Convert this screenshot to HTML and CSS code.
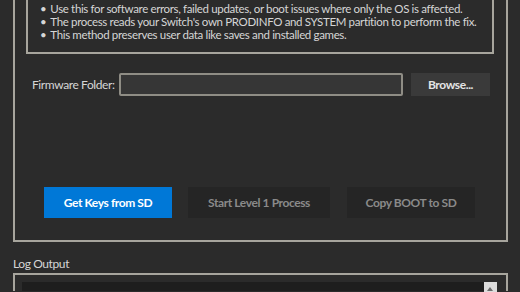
FILE: index.html
```html
<!DOCTYPE html>
<html lang="en">
<head>
    <meta charset="UTF-8">
    <meta name="viewport" content="width=device-width, initial-scale=1.0">
    <title>Level 1 Repair</title>
    <link rel="stylesheet" href="styles.css">
</head>
<body>
    <!-- Level 1 repair group -->
    <section class="group">
        <div class="info">
            <ul>
                <li>Use this for software errors, failed updates, or boot issues where only the OS is affected.</li>
                <li>The process reads your Switch's own PRODINFO and SYSTEM partition to perform the fix.</li>
                <li>This method preserves user data like saves and installed games.</li>
            </ul>
        </div>

        <div class="folder-row">
            <label class="folder-label">Firmware Folder:</label>
            <div class="textbox"></div>
            <button class="btn browse">Browse...</button>
        </div>

        <div class="actions">
            <button class="btn primary">Get Keys from SD</button>
            <button class="btn disabled">Start Level 1 Process</button>
            <button class="btn disabled">Copy BOOT to SD</button>
        </div>
    </section>

    <!-- Log -->
    <div class="log">
        <div class="log-label">Log Output</div>
        <div class="log-box">
            <div class="log-text"></div>
            <div class="scrollbar"><span class="arrow-up"></span></div>
        </div>
    </div>
</body>
</html>
```

FILE: styles.css
```css
html, body {
    margin: 0;
    height: 100%;
    overflow: hidden;
}
body {
    font-family: Lato, "Noto Sans", sans-serif;
    font-size: 12px;
    letter-spacing: -0.4px;
    background-color: #2b2b2b;
    color: #d6d6d6;
    padding: 0 12px 0 13px;
    white-space: nowrap;
}
.group {
    border: 2px solid #a7a59d;
    border-top: none;
    padding: 0 12px 22px 11px;
}
.info {
    border: 2px solid #a7a59d;
    border-top: none;
    height: 54px;
    box-sizing: border-box;
    padding-top: 2px;
}
.info ul {
    margin: 0;
    padding-left: 12px;
    list-style: none;
    font-size: 11.5px;
    letter-spacing: -0.35px;
    line-height: 13px;
}
.info li::before {
    content: "\2022";
    margin-right: 4px;
}
.folder-row {
    display: flex;
    align-items: center;
    margin-top: 19px;
    padding-left: 6px;
}
.folder-label {
    width: 87px;
}
.textbox {
    width: 284px;
    height: 23px;
    box-sizing: border-box;
    border: 2px solid #8f8d85;
    border-radius: 2px;
    background-color: #363636;
}
.btn {
    font-family: inherit;
    font-size: 12px;
    font-weight: bold;
    letter-spacing: -0.4px;
    border: none;
    padding: 0;
}
.browse {
    margin-left: 8px;
    width: 79px;
    height: 23px;
    background-color: #3a3a3a;
    color: #e4e4e4;
}
.actions {
    display: flex;
    margin-top: 91px;
    padding-left: 18px;
}
.actions .btn {
    height: 31px;
    width: 128px;
    margin-right: 16px;
}
.actions .btn:nth-child(2) {
    width: 142px;
    margin-right: 17px;
}
.primary {
    background-color: #0078d7;
    color: #ffffff;
}
.disabled {
    background-color: #252525;
    color: #8a8a8a;
}
.log-label {
    margin-top: 14px;
    height: 15px;
    line-height: 15px;
}
.log-box {
    margin-top: 2px;
    border: 2px solid #a7a59d;
    border-bottom: none;
    padding: 7px 9px 0 7px;
    display: flex;
    height: 9px;
}
.log-text {
    flex: 1;
    background-color: #1e1e1e;
}
.scrollbar {
    width: 13px;
    background-color: #1e1e1e;
}
.arrow-up {
    display: block;
    height: 14px;
    background-color: #dcdcdc;
    position: relative;
}
.arrow-up::after {
    content: "";
    position: absolute;
    left: 3px;
    top: 5px;
    border-left: 3px solid transparent;
    border-right: 3px solid transparent;
    border-bottom: 4px solid #6a6a6a;
}
```
